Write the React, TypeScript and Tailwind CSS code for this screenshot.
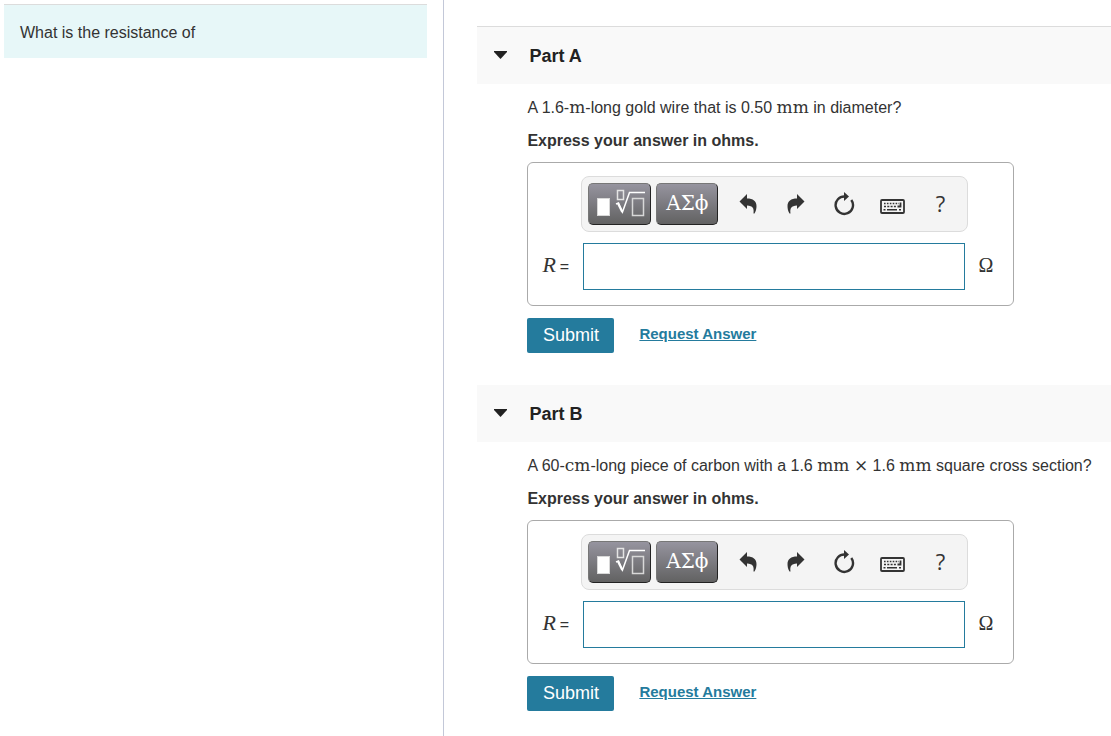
import type { ReactNode } from 'react';

interface PartProps {
    id: string;
    title: string;
    first?: boolean;
    children: ReactNode;
}

function Unit({ children }: { children: ReactNode }) {
    return <span className="font-['DejaVu_Serif',serif] text-[17px] leading-none">{children}</span>;
}

function TemplatesIcon() {
    return (
        <svg width="50" height="30" viewBox="0 0 50 30" fill="none" aria-hidden="true">
            <rect x="2.5" y="9.5" width="12" height="17" fill="#fff" stroke="#d8d8d8" />
            <rect x="22.5" y="1.5" width="6" height="9" stroke="#e4e4e4" strokeWidth="1.5" />
            <path d="M21 15l2.500-1 4 9L34.500 3.500H50" stroke="#fff" strokeWidth="1.5" />
            <path d="M23 14.500l4.200 8.500" stroke="#fff" strokeWidth="2" />
            <rect x="37.500" y="9.500" width="11" height="17" stroke="#d8d8d8" strokeWidth="1.5" />
        </svg>
    );
}

function UndoIcon() {
    return (
        <svg width="18" height="20" viewBox="0 0 18 20" fill="#333" aria-hidden="true">
            <path d="M0.500 7.500L8 0v4.500c6 0 9.500 2.500 9.500 7.500 0 2.700-.6 5.300-2 7.500h-1c.7-5-.5-7.700-6.500-8V15z" />
        </svg>
    );
}

function RedoIcon() {
    return (
        <svg width="18" height="20" viewBox="0 0 18 20" fill="#333" aria-hidden="true">
            <path d="M17.500 7.500L10 0v4.500c-6 0-9.500 2.500-9.500 7.500 0 2.700.6 5.300 2 7.500h1c-.7-5 .5-7.700 6.500-8V15z" />
        </svg>
    );
}

function ResetIcon() {
    return (
        <svg width="22" height="24" viewBox="0 0 22 24" fill="none" aria-hidden="true">
            <path d="M12 4.500A8.700 8.700 0 1 0 18.300 8" stroke="#333" strokeWidth="2.400" />
            <path d="M11 0l5 4.500-5 4.500z" fill="#333" />
        </svg>
    );
}

function KeyboardIcon() {
    return (
        <svg width="25" height="15" viewBox="0 0 25 15" fill="none" aria-hidden="true">
            <rect x="1" y="1" width="23" height="13" rx="1" stroke="#333" strokeWidth="1.800" />
            <path d="M4 4.500h15" stroke="#333" strokeWidth="1.600" strokeDasharray="1.600 1.300" />
            <path d="M4 7.500h13" stroke="#333" strokeWidth="1.600" strokeDasharray="2 1.300" />
            <path d="M17.500 7.500h3V3.500" stroke="#333" strokeWidth="1.800" />
            <path d="M3.500 10.800h2M7 10.800h10M19 10.800h2" stroke="#333" strokeWidth="1.500" />
        </svg>
    );
}

const paletteButton =
    'flex h-[42px] shrink-0 items-center justify-center rounded-[5px] border border-t-[#777] border-l-[#777] border-r-[#222] border-b-[#222] bg-linear-to-b from-[#96949f] to-[#626262]';
const toolButton = 'flex h-[42px] w-12 items-center justify-center';

function Toolbar() {
    return (
        <div className="flex items-center rounded-lg border border-[#dcdcdc] bg-[#f4f4f4] py-1.5 pl-1.5">
            <button type="button" aria-label="Templates" className={`${paletteButton} w-[63px]`}>
                <TemplatesIcon />
            </button>
            <button
                type="button"
                className={`${paletteButton} ml-[5px] mr-1.5 w-[62px] pb-0.5 font-['DejaVu_Serif',serif] text-xl text-white`}
            >
                ΑΣϕ
            </button>
            <button type="button" aria-label="Undo" className={toolButton}>
                <UndoIcon />
            </button>
            <button type="button" aria-label="Redo" className={toolButton}>
                <RedoIcon />
            </button>
            <button type="button" aria-label="Reset" className={toolButton}>
                <ResetIcon />
            </button>
            <button type="button" aria-label="Keyboard shortcuts" className={`${toolButton} pt-1`}>
                <KeyboardIcon />
            </button>
            <button type="button" aria-label="Help" className={`${toolButton} pb-0.5 font-['Open_Sans',sans-serif] text-[22px] text-[#333]`}>
                ?
            </button>
        </div>
    );
}

function Part({ id, title, first, children }: PartProps) {
    return (
        <section className="pb-8">
            <h2
                className={`flex items-center bg-[#f9f9f9] pl-[17px] text-lg font-bold text-[#222] ${first ? 'h-[58px] border-t border-[#dcdcdc]' : 'h-[57px]'}`}
            >
                <button type="button" aria-expanded="true" className="flex items-center gap-[22px]">
                    <svg width="13" height="10" viewBox="0 0 13 10" fill="#222" aria-hidden="true">
                        <path d="M0 0h13v1L6.500 8 0 1z" />
                    </svg>
                    {title}
                </button>
            </h2>
            <div className="pl-[50px] pt-3">
                <p className="text-base leading-6">{children}</p>
                <p className="mt-[9px] text-base font-bold leading-6">Express your answer in ohms.</p>
                <div className="mt-[9px] max-w-[487px] rounded-md border border-[#aaa] pb-[15px] pl-[14px] pr-5 pt-[13px]">
                    <div className="pl-[39px] pr-[25px]">
                        <Toolbar />
                    </div>
                    <div className="mt-[11px] flex items-center">
                        <label htmlFor={id} className="flex w-[41px] items-baseline gap-1 pb-1 text-base">
                            <span className="font-['Liberation_Serif',serif] text-[22px] italic">R</span>
                            <span>=</span>
                        </label>
                        <input
                            id={id}
                            type="text"
                            className="h-[47px] min-w-0 flex-1 border border-[#247b9d] bg-white px-2 outline-none"
                        />
                        <span className="ml-3.5 pb-1 font-['Liberation_Serif',serif] text-xl">Ω</span>
                    </div>
                </div>
                <div className="mt-3 flex items-center gap-[25px]">
                    <button type="button" className="h-[35px] w-[87px] rounded-xs bg-[#247b9d] pb-0.5 text-lg text-white">
                        Submit
                    </button>
                    <a href="#" className="pb-0.5 text-[15px] font-bold text-[#247b9d] underline">
                        Request Answer
                    </a>
                </div>
            </div>
        </section>
    );
}

export default function App() {
    return (
        <div className="flex min-h-screen bg-white font-['Liberation_Sans',Arial,sans-serif] text-[#333]">
            <aside className="w-2/5 shrink-0 border-r border-[#c3c8d8] pl-1 pr-4 pt-1">
                <p className="border-t border-[#dcdcdc] bg-[#e7f7f8] px-4 pb-[14px] pt-4 text-base leading-[23px]">
                    What is the resistance of
                </p>
            </aside>
            <main className="min-w-0 flex-1 pl-[33px] pt-[26px]">
                <Part id="part-a" title="Part A" first>
                    A 1.6-<Unit>m</Unit>-long gold wire that is 0.50 <Unit>mm</Unit> in diameter?
                </Part>
                <div className="-mb-8">
                    <Part id="part-b" title="Part B">
                        A 60-<Unit>cm</Unit>-long piece of carbon with a 1.6 <Unit>mm</Unit> <Unit>×</Unit> 1.6{' '}
                        <Unit>mm</Unit> square cross section?
                    </Part>
                </div>
            </main>
        </div>
    );
}
